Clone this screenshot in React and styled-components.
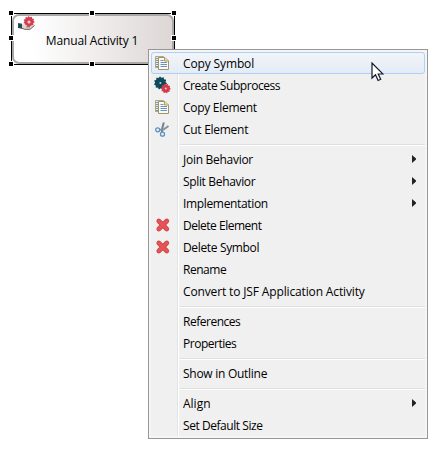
import React from 'react';
import styled, { createGlobalStyle } from 'styled-components';

const GlobalStyle = createGlobalStyle`
  * { box-sizing: border-box; }
  body {
    margin: 0;
    background: #fff;
    color: #000;
    font-family: "Open Sans", "Noto Sans", sans-serif;
    font-size: 12px;
    overflow: hidden;
  }
`;

const Canvas = styled.main`
  position: relative;
  width: 442px;
  height: 454px;
  padding: 13px 0 0 11px;
`;

const Selection = styled.div`
  position: relative;
  width: 164px;
  height: 52px;
  border: 1px solid #000;
`;

const ActivityNode = styled.div`
  display: flex;
  align-items: center;
  justify-content: center;
  height: 50px;
  padding: 3px 2px 0 0;
  border: 2px solid #aaa7a7;
  border-radius: 7px;
  background: linear-gradient(90deg, #fff 12%, #ddd7d5 100%);
`;

const ActivityName = styled.span`
  line-height: 18px;
  white-space: nowrap;
  letter-spacing: -0.15px;
`;

const ActivityIcon = styled.svg`
  position: absolute;
  left: 6px;
  top: 2px;
`;

const Handle = styled.i`
  position: absolute;
  left: ${(p) => p.$x}px;
  top: ${(p) => p.$y}px;
  width: 4px;
  height: 4px;
  background: #000;
  outline: 1px solid #fff;
`;

const Menu = styled.ul`
  position: absolute;
  left: 148px;
  top: 49px;
  width: 280px;
  margin: 0;
  padding: 2px;
  list-style: none;
  border: 1px solid #979797;
  background: linear-gradient(90deg, transparent 26px, #e2e3e3 26px, #e2e3e3 27px, #fff 27px, #fff 28px, transparent 28px) 2px 2px / 274px 384px no-repeat,
    linear-gradient(#f0f0f0, #f0f0f0) 2px 2px / 274px 384px no-repeat, #f5f5f5;
`;

const Item = styled.li`
  display: grid;
  grid-template-columns: 24px 1fr 11px;
  align-items: center;
  height: 22px;
  padding: 0 1px 0 3px;
  border: 1px solid ${(p) => (p.$active ? '#aecff7' : 'transparent')};
  border-radius: 3px;
  background: ${(p) => (p.$active ? 'linear-gradient(rgba(243,246,250,.85), rgba(225,235,247,.85))' : 'none')};
`;

const IconCell = styled.span`
  display: flex;
  width: 16px;
  height: 16px;
`;

const Label = styled.span`
  padding: 1px 0 0 4px;
  line-height: 19px;
  white-space: nowrap;
  letter-spacing: ${(p) => p.$track || 0}px;
`;

const Separator = styled.li`
  height: 2px;
  margin: 4px 0 2px 28px;
  border-top: 1px solid #e0e0e0;
  border-bottom: 1px solid #fff;
`;

const Cursor = styled.svg`
  position: absolute;
  left: 371px;
  top: 62px;
`;

const gearPath = (cx, cy, r, teeth) => {
  const points = [];
  for (let i = 0; i < teeth * 4; i += 1) {
    const radius = i % 4 < 2 ? r : r * 0.84;
    const a = (i / (teeth * 4)) * Math.PI * 2;
    points.push(`${(cx + radius * Math.cos(a)).toFixed(2)} ${(cy + radius * Math.sin(a)).toFixed(2)}`);
  }
  return `M${points.join('L')}Z`;
};

const CopyIcon = () => (
  <svg width="16" height="16" viewBox="0 0 16 16">
    <path d="M.5 1.500h8v11h-8z" fill="#e4edf0" stroke="#b3a67f" />
    <path d="M1 3.500h2M1 5.500h2M1 7.500h2M1 9.500h2M1 11.500h2" stroke="#6f9aae" />
    <path d="M3.500 2.500h6.500l3.500 3.500v8.500h-10z" fill="#f6fafd" stroke="#a8935f" />
    <path d="M9.500 2.500v3.500h4" fill="#ecdcae" stroke="#b69a55" />
    <path d="M5.500 5.500h3M5.500 7.500h6.500M5.500 9.500h6.500M5.500 11.500h6.500" stroke="#6c92b5" />
  </svg>
);

const GearsIcon = () => (
  <svg width="16" height="16" viewBox="0 0 16 16" overflow="visible">
    <path d={gearPath(5.4, 6, 6.4, 11)} fill="#0f4a5c" />
    <circle cx="5.400" cy="6" r="1" fill="#c3d2d7" />
    <path d={gearPath(10.8, 11.5, 4.8, 10)} fill="#d33a4b" />
    <circle cx="10.800" cy="11.500" r="1" fill="#f2c9ce" />
  </svg>
);

const CutIcon = () => (
  <svg width="16" height="16" viewBox="0 0 16 16" fill="none">
    <path d="M8.800 1.500L7.200 7.500 7 11" stroke="#71808f" strokeWidth="2" />
    <path d="M13.500 5L8.500 8.500 4.500 8.800" stroke="#8593a1" strokeWidth="2" />
    <circle cx="2.700" cy="8.800" r="2" stroke="#5b91bd" strokeWidth="1.300" />
    <circle cx="7.500" cy="13.200" r="2" stroke="#5b91bd" strokeWidth="1.300" />
  </svg>
);

const DeleteIcon = () => (
  <svg width="16" height="16" viewBox="0 0 16 16">
    <path d="M3.800 4l8 8M11.800 4l-8 8" stroke="#c9484b" strokeWidth="4.700" strokeLinecap="round" />
    <path d="M3.800 4l8 8M11.800 4l-8 8" stroke="#ea5354" strokeWidth="3" strokeLinecap="round" />
  </svg>
);

const Arrow = () => (
  <svg width="4" height="8" viewBox="0 0 4 8">
    <path d="M0 0l4 3.500v1L0 8z" fill="#222" />
  </svg>
);

const ICONS = { copy: CopyIcon, gears: GearsIcon, cut: CutIcon, remove: DeleteIcon };

const GROUPS = [
  [
    { label: 'Copy Symbol', icon: 'copy', active: true, track: -0.13 },
    { label: 'Create Subprocess', icon: 'gears', track: -0.45 },
    { label: 'Copy Element', icon: 'copy', track: -0.28 },
    { label: 'Cut Element', icon: 'cut', track: -0.28 },
  ],
  [
    { label: 'Join Behavior', submenu: true, track: -0.28 },
    { label: 'Split Behavior', submenu: true, track: -0.34 },
    { label: 'Implementation', submenu: true, track: -0.34 },
    { label: 'Delete Element', icon: 'remove', track: -0.48 },
    { label: 'Delete Symbol', icon: 'remove', track: -0.35 },
    { label: 'Rename', track: -0.48 },
    { label: 'Convert to JSF Application Activity', track: -0.14 },
  ],
  [
    { label: 'References', track: -0.48 },
    { label: 'Properties', track: -0.48 },
  ],
  [{ label: 'Show in Outline', track: -0.27 }],
  [
    { label: 'Align', submenu: true, track: 0 },
    { label: 'Set Default Size', track: -0.45 },
  ],
];

const HANDLES = [[-3, -3], [78, -3], [160, -3], [-3, 22], [160, 22], [-3, 48], [78, 48], [160, 48]];

const MenuItem = ({ label, icon, active, submenu, track }) => {
  const Icon = icon && ICONS[icon];
  return (
    <Item $active={active}>
      <IconCell>{Icon && <Icon />}</IconCell>
      <Label $track={track}>{label}</Label>
      {submenu && <Arrow />}
    </Item>
  );
};

export default function App() {
  return (
    <>
      <GlobalStyle />
      <Canvas>
        <Selection>
          <ActivityNode>
            <ActivityName>Manual Activity 1</ActivityName>
          </ActivityNode>
          <ActivityIcon width="18" height="15" viewBox="0 0 18 15">
            <path d={gearPath(11, 5.7, 5.5, 11)} fill="#d63d4e" />
            <circle cx="11" cy="6" r="1.500" fill="#f3d5d9" />
            <path d="M3.500 8.500L7 8.300 9 10h3.500L16 8.500l.5 1-4.500 3.500H6.500l-3-1z" fill="#e6d2c8" />
            <path d="M3.500 12l3 1.300H12l4.500-3.800M8.500 10.800H12" fill="none" stroke="#51484a" strokeWidth=".9" />
            <path d="M0 7l4 .8v5L0 12z" fill="#284958" />
          </ActivityIcon>
          {HANDLES.map(([x, y]) => (
            <Handle key={`${x},${y}`} $x={x} $y={y} />
          ))}
        </Selection>
        <Menu>
          {GROUPS.map((group, index) => (
            <React.Fragment key={group[0].label}>
              {index > 0 && <Separator />}
              {group.map((item) => (
                <MenuItem key={item.label} {...item} />
              ))}
            </React.Fragment>
          ))}
        </Menu>
        <Cursor width="13" height="20" viewBox="0 0 13 20">
          <path d="M1 1v15l3.500-3.300 2.600 5.800 2.600-1.200-2.500-5.300H12z" fill="#fff" stroke="#111827" strokeWidth="1.200" />
        </Cursor>
      </Canvas>
    </>
  );
}
